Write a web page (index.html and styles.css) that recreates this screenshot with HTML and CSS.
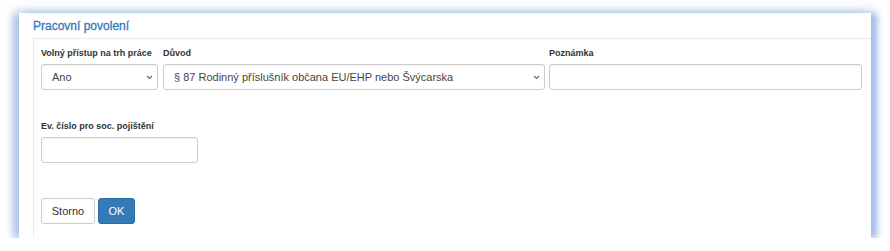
FILE: index.html
```html
<!DOCTYPE html>
<html lang="cs">
<head>
<meta charset="utf-8">
<title>Pracovní povolení</title>
<link rel="stylesheet" href="styles.css">
</head>
<body>
<div class="panel">
  <div class="panel-head"><span class="title">Pracovní povolení</span></div>
  <div class="panel-body">
    <div class="row row-top">
      <div class="field">
        <label class="lbl">Volný přístup na trh práce</label>
        <div class="select-wrap">
          <select class="ctl sel"><option>Ano</option></select>
          <svg class="chev" width="7" height="5" viewBox="0 0 7 5"><path d="M1 1 L3.5 3.5 L6 1" fill="none" stroke="#666" stroke-width="1.1"/></svg>
        </div>
      </div>
      <div class="field">
        <label class="lbl">Důvod</label>
        <div class="select-wrap">
          <select class="ctl sel"><option>§ 87 Rodinný příslušník občana EU/EHP nebo Švýcarska</option></select>
          <svg class="chev" width="7" height="5" viewBox="0 0 7 5"><path d="M1 1 L3.5 3.5 L6 1" fill="none" stroke="#666" stroke-width="1.1"/></svg>
        </div>
      </div>
      <div class="field">
        <label class="lbl">Poznámka</label>
        <input class="ctl" type="text">
      </div>
    </div>
    <div class="row row-second">
      <div class="field">
        <label class="lbl">Ev. číslo pro soc. pojištění</label>
        <input class="ctl ctl-short" type="text">
      </div>
    </div>
    <div class="actions">
      <button class="btn btn-default">Storno</button>
      <button class="btn btn-primary">OK</button>
    </div>
  </div>
</div>
</body>
</html>
```
FILE: styles.css
```css
html, body {
  margin: 0;
  padding: 0;
  background: #fff;
  font-family: "Liberation Sans", Arial, sans-serif;
}
body {
  padding: 13px 19px 0 19px;
}
.panel {
  width: 852px;
  height: 225px;
  box-sizing: border-box;
  background: #fff;
  padding-left: 14px;
  display: flex;
  flex-direction: column;
  box-shadow:
    7px 0 6px -1px rgba(160, 188, 230, 0.95),
    -7px 0 7px -1px rgba(165, 192, 232, 0.85),
    0 0 10px 3px rgba(170, 195, 234, 0.6);
}
.panel-head {
  height: 25px;
  box-sizing: border-box;
  padding-top: 6px;
}
.title {
  font-size: 12px;
  line-height: 14px;
  color: #337ab7;
  display: block;
  -webkit-text-stroke: 0.3px #337ab7;
}
.panel-body {
  flex: 1;
  border-top: 1px solid #eaeaea;
  border-left: 1px solid #eaeaea;
  padding: 8px 0 0 7px;
}
.row {
  display: grid;
  column-gap: 4px;
}
.row-top {
  grid-template-columns: 118px 382px 313px;
}
.row-second {
  margin-top: 30px;
  grid-template-columns: 157px;
}
.field {
  display: flex;
  flex-direction: column;
}
.lbl {
  font-size: 9px;
  font-weight: bold;
  line-height: 12px;
  color: #333;
  margin-bottom: 5px;
  white-space: nowrap;
}
.ctl {
  box-sizing: border-box;
  height: 26px;
  width: 100%;
  border: 1px solid #ccc;
  border-radius: 3px;
  background: #fff;
  font-family: "Liberation Sans", Arial, sans-serif;
  font-size: 11px;
  color: #444;
  padding: 0 10px;
  margin: 0;
  box-shadow: inset 0 1px 1px rgba(0,0,0,0.05);
}
.row-top .field:first-child .select-wrap {
  width: 117px;
}
.select-wrap {
  position: relative;
}
.sel {
  -webkit-appearance: none;
  appearance: none;
  padding-right: 20px;
}
.chev {
  position: absolute;
  right: 5px;
  top: 11px;
  pointer-events: none;
}
.actions {
  margin-top: 35px;
  display: flex;
  gap: 3px;
}
.btn {
  box-sizing: border-box;
  height: 26px;
  font-family: "Liberation Sans", Arial, sans-serif;
  font-size: 11px;
  border-radius: 3px;
  border: 1px solid #ccc;
  margin: 0;
}
.btn-default {
  width: 54px;
  background: #fff;
  color: #333;
}
.btn-primary {
  width: 37px;
  background: #337ab7;
  border-color: #2e6da4;
  color: #fff;
}
```
